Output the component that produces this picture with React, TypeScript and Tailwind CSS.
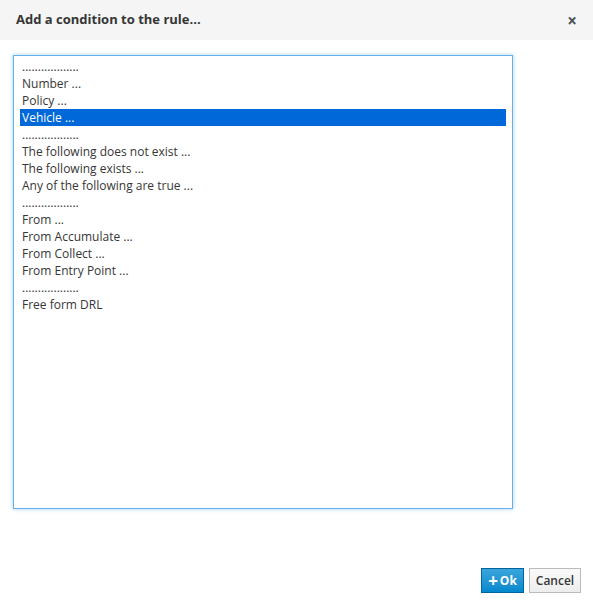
const items = [
  "..................",
  "Number ...",
  "Policy ...",
  "Vehicle ...",
  "..................",
  "The following does not exist ...",
  "The following exists ...",
  "Any of the following are true ...",
  "..................",
  "From ...",
  "From Accumulate ...",
  "From Collect ...",
  "From Entry Point ...",
  "..................",
  "Free form DRL",
]

export default function App() {
  return (
    <div
      className="flex h-[606px] w-[593px] flex-col bg-white text-[#363636]"
      style={{ fontFamily: '"Open Sans", sans-serif' }}
    >
      {/* Header */}
      <div className="flex h-[40px] items-center justify-between bg-[#f5f5f5] pr-[16px] pl-[16px]">
        <h4 className="text-[13px] font-bold text-[#363636]">Add a condition to the rule...</h4>
        <span className="text-[17px] leading-none font-bold text-[#4d5258]">×</span>
      </div>

      {/* Body */}
      <div className="flex-1 pt-[15px] pl-[13px]">
        <div className="h-[454px] w-[500px] border border-[#66afe9] pt-[2px] pr-[6px] pl-[6px] shadow-[0_0_4px_rgba(102,175,233,0.6)]">
          {items.map((item, i) => (
            <div
              key={i}
              className={
                "h-[17px] pl-[2px] text-[12px] leading-[17px] " +
                (i === 3 ? "bg-[#0068d9] text-white" : "text-[#363636]")
              }
            >
              {item}
            </div>
          ))}
        </div>
      </div>

      {/* Footer */}
      <div className="flex justify-end gap-[5px] pr-[12px] pb-[13px]">
        <button className="flex h-[25px] w-[43px] items-center justify-center gap-[2px] border border-[#00659c] bg-gradient-to-b from-[#39a5dc] to-[#0088ce] text-[12px] font-bold text-white">
          <span className="text-[17px] leading-none font-bold">+</span>
          Ok
        </button>
        <button className="flex h-[25px] w-[52px] items-center justify-center border border-[#bbbbbb] bg-gradient-to-b from-[#fafafa] to-[#ededed] text-[12px] font-semibold text-[#363636]">
          Cancel
        </button>
      </div>
    </div>
  )
}
